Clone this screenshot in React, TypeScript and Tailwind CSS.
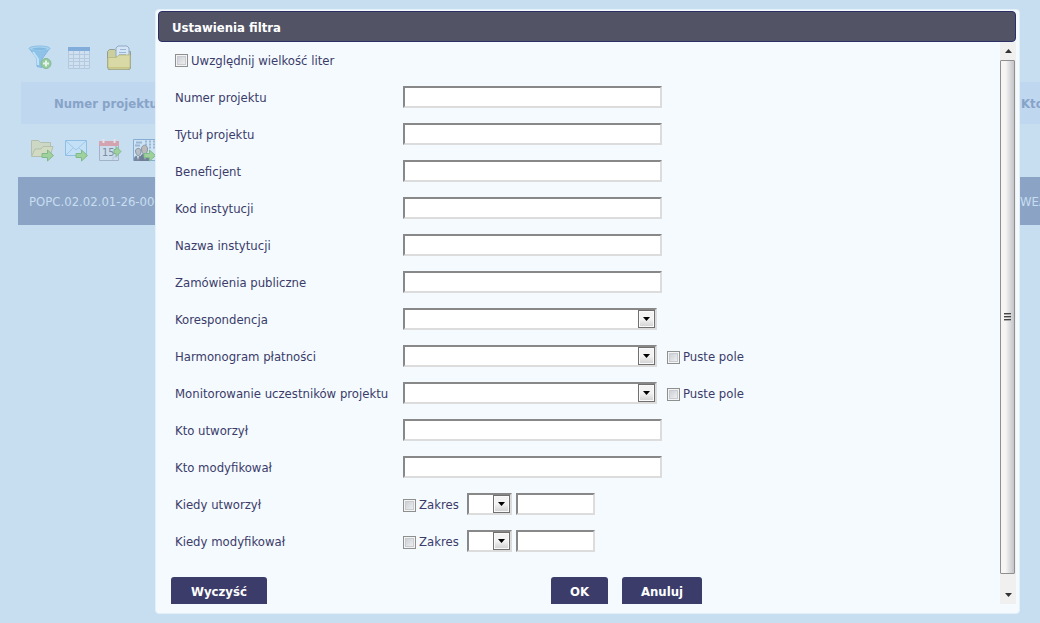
import { useId, type ReactNode } from "react";

const TEXT_FIELDS = ["Numer projektu", "Tytuł projektu", "Beneficjent", "Kod instytucji", "Nazwa instytucji", "Zamówienia publiczne"];
const AUTHOR_FIELDS = ["Kto utworzył", "Kto modyfikował"];
const DATE_FIELDS = ["Kiedy utworzył", "Kiedy modyfikował"];

const INSET = "h-[22px] bg-white border-2 border-t-[#888] border-l-[#888] border-r-[#dcdcdc] border-b-[#dcdcdc] outline-none";

function GreenArrow() {
    return <path d="M12 15.500h5.500v-3.500l6 5.500-6 5.500v-3.500H12z" fill="#a0d09b" stroke="#7fbb8a" strokeWidth="1" />;
}

function FunnelIcon() {
    return (
        <svg width="24" height="24" viewBox="0 0 24 24">
            <path d="M1.500 3.500 9 14v7.500l5 1V14l7.500-10.500z" fill="#8fc2e8" stroke="#7fb5e0" />
            <path d="M5 7 10 14v6" fill="none" stroke="#bfe1f6" strokeWidth="2" />
            <ellipse cx="11.500" cy="3.500" rx="10.500" ry="2.500" fill="#a9d4f0" stroke="#8bbfe5" />
            <ellipse cx="11.500" cy="3.800" rx="7.500" ry="1.200" fill="#84bae2" />
            <circle cx="18" cy="18.500" r="5" fill="#95cb9b" stroke="#83b996" />
            <path d="M18 15.500v6M15 18.500h6" stroke="#e4f3ee" strokeWidth="2" />
        </svg>
    );
}

function TableIcon() {
    return (
        <svg width="24" height="24" viewBox="0 0 24 24">
            <path d="M1.500 2.500h21v21h-21z" fill="#cfe1f1" stroke="#b3c8df" />
            <path d="M1 2h22v4H1z" fill="#82addb" />
            <path d="M1 9.500h22M1 13.500h22M1 16.500h22M1 20.500h22M6.500 6v18M12.500 6v18M17.500 6v18" stroke="#b5c9df" />
        </svg>
    );
}

function DocumentsIcon() {
    return (
        <svg width="26" height="26" viewBox="0 0 26 26">
            <path d="M1.500 22V6.500l2-2h5l2 2h14V23l-1 1.500h-21z" fill="#cbcf9d" stroke="#939d92" />
            <path d="M10 12V3l2-2h9l2 2v9z" fill="#d4e5f5" stroke="#8fa9c6" />
            <path d="M14 4.500h6M13 7.500h7M13 9.500h7" stroke="#9ab7d8" />
            <path d="M2 12.500h8l3-2.500h11v12l-1.500 2h-19L2 22z" fill="#d9d9a6" stroke="#bcbd86" />
            <path d="M3 22.500h20" stroke="#c9c584" />
        </svg>
    );
}

function FolderSendIcon() {
    return (
        <svg width="24" height="24" viewBox="0 0 24 24">
            <path d="M1.500 17.500v-15h7l2 2h10v4" fill="#ccd7c4" stroke="#b3bfae" />
            <path d="M1.500 18.500 5 11h6l2-2.500h10l-3 10z" fill="#d2dac2" stroke="#b3bfae" />
            <GreenArrow />
        </svg>
    );
}

function MailSendIcon() {
    return (
        <svg width="24" height="24" viewBox="0 0 24 24">
            <path d="M1.500 2.500h21v15h-21z" fill="#c4e0f7" stroke="#8fbfe5" />
            <path d="m2 3 10 9L22 3M2 17l7-7M22 17l-7-7" fill="none" stroke="#9fc9e9" />
            <GreenArrow />
        </svg>
    );
}

function CalendarSendIcon() {
    return (
        <svg width="24" height="24" viewBox="0 0 24 24">
            <path d="M1.500 3.500h19v19h-19z" fill="#cbdcec" stroke="#a2b3c9" />
            <path d="M1 3h20v5H1z" fill="#d3a3b0" />
            <path d="M5.500 1v4M16.500 1v4" stroke="#e6e1ea" strokeWidth="2" />
            <text x="4" y="18" fontSize="11" fontFamily="DejaVu Sans Condensed, DejaVu Sans, sans-serif" fill="#7d8ca3">15</text>
            <path d="M15 22v-3h6" fill="none" stroke="#b5c7dc" />
            <path d="M16 11.500h2V8.500l5 5-5 5v-3h-2z" fill="#a0d09b" stroke="#7fbb8a" />
        </svg>
    );
}

function PeopleSendIcon() {
    return (
        <svg width="24" height="24" viewBox="0 0 24 24">
            <path d="M1.500 1.500h22v21h-22z" fill="#cde2f3" stroke="#86aed2" />
            <path d="M4 4.500h6M3 7.500h5M13 3.500h2m2 0h2m2 0h2M13 6.500h2m2 0h2m2 0h2M17 9.500h2m2 0h2" stroke="#9bb6d3" strokeWidth="2" />
            <path d="M2 23c0-4 0-5 4-5.500 4 .5 5 2 5 5.500z" fill="#77879d" />
            <path d="M8 23c0-5 1-7 4.500-7.500 3 .5 4.500 2 4.500 7.500z" fill="#6f7f96" />
            <path d="M3.500 13c0-3 5-4 5.500 0 0 6-5 6-5.500 0z" fill="#b9bfc4" stroke="#8797aa" />
            <path d="M9.500 11c0-5 6-5 6 0 0 7-6 7-6 0z" fill="#bcbab9" stroke="#8797aa" />
            <path d="m5 18 1 4 1-4M12 17l1 5 1-5" fill="#dde9f4" />
            <GreenArrow />
        </svg>
    );
}

function IconButton({ label, children }: { label: string; children: ReactNode }) {
    return <button type="button" aria-label={label} className="shrink-0">{children}</button>;
}

function Check({ label }: { label: string }) {
    return (
        <label className="flex items-center gap-[3px] whitespace-nowrap">
            <input
                type="checkbox"
                className="appearance-none size-[13px] border border-[#8e8f8f] bg-linear-to-br from-[#c4c9cf] to-[#f6f6f6] shadow-[inset_0_0_0_1px_#f4f4f4,inset_0_0_0_2px_#c8ccd1] checked:bg-[#3b3c69]"
            />
            {label}
        </label>
    );
}

function SelectBox({ id, label, className }: { id?: string; label?: string; className: string }) {
    return (
        <div className={`relative ${className}`}>
            <select id={id} aria-label={label} className={`${INSET} block w-full appearance-none`} />
            <span className="pointer-events-none absolute right-[2px] inset-y-[2px] flex w-[17px] items-center justify-center border border-[#707070] bg-linear-to-b from-[#f3f3f3] from-50% to-[#d0d0d0] shadow-[inset_0_0_0_1px_#fafafa]">
                <svg width="7" height="4" viewBox="0 0 7 4"><path d="M0 0h7L3.500 4z" fill="#000" /></svg>
            </span>
        </div>
    );
}

function Row({ id, label, children }: { id?: string; label: string; children: ReactNode }) {
    return (
        <div className="flex h-[37px] items-center pb-px">
            <label htmlFor={id} className="w-[228px] shrink-0 pt-[2px] whitespace-nowrap">{label}</label>
            {children}
        </div>
    );
}

function TextRow({ label }: { label: string }) {
    const id = useId();
    return (
        <Row id={id} label={label}>
            <input id={id} type="text" className={`${INSET} w-[259px]`} />
        </Row>
    );
}

function SelectRow({ label, canBeEmpty }: { label: string; canBeEmpty?: boolean }) {
    const id = useId();
    return (
        <Row id={id} label={label}>
            <SelectBox id={id} className="mr-[10px] w-[254px]" />
            {canBeEmpty && <div className="pt-[2px]"><Check label="Puste pole" /></div>}
        </Row>
    );
}

function DateRow({ label }: { label: string }) {
    const id = useId();
    return (
        <Row id={id} label={label}>
            <div className="w-16 pt-[2px]"><Check label="Zakres" /></div>
            <SelectBox label={label} className="mr-1 w-[45px]" />
            <input id={id} type="text" className={`${INSET} w-[79px]`} />
        </Row>
    );
}

function DialogButton({ className, children }: { className: string; children: ReactNode }) {
    return <button type="button" className={`h-[27px] rounded-t-[3px] bg-[#3b3c69] pt-[2px] font-bold text-white ${className}`}>{children}</button>;
}

function ScrollTrack() {
    return (
        <div aria-hidden="true" className="flex w-4 shrink-0 flex-col items-start bg-[#f0f0f0]">
            <div className="flex h-[18px] w-full items-center justify-center"><svg width="7" height="4" viewBox="0 0 7 4"><path d="M3.500 0 7 4H0z" fill="#333" /></svg></div>
            <div className="flex w-[15px] flex-1 flex-col items-center justify-center gap-px rounded-[1px] border border-[#8f8f8f] bg-linear-to-r from-[#f5f5f5] from-35% to-[#c3c4c8]">
                <div className="h-[2px] w-[7px] border-t border-[#444] bg-[#aaa]" />
                <div className="h-[2px] w-[7px] border-t border-[#444] bg-[#aaa]" />
                <div className="h-[2px] w-[7px] border-t border-[#444] bg-[#aaa]" />
            </div>
            <div className="flex h-[30px] w-full items-center justify-center pt-3"><svg width="7" height="4" viewBox="0 0 7 4"><path d="M0 0h7L3.500 4z" fill="#333" /></svg></div>
        </div>
    );
}

export default function App() {
    return (
        <div className="min-h-screen overflow-hidden bg-[#c7ddf0] font-['DejaVu_Sans_Condensed','DejaVu_Sans',sans-serif] text-[13px] leading-4 text-[#3b3c69]">
            {/* Project list behind the dialog */}
            <main className="pt-[45px]">
                <div className="flex h-6 gap-[15px] pl-7">
                    <IconButton label="Filtr"><FunnelIcon /></IconButton>
                    <IconButton label="Kolumny"><TableIcon /></IconButton>
                    <IconButton label="Dokumenty"><DocumentsIcon /></IconButton>
                </div>
                <div className="mt-[13px] ml-[21px] flex h-[42px] items-center justify-between bg-[#bfd7ef] pt-[2px] pl-[33px] font-bold text-[#88a3c8]">
                    <span>Numer projektu</span>
                    <span className="w-[19px] overflow-hidden">Kto</span>
                </div>
                <div className="mt-[14px] flex gap-[10px] pl-[30px]">
                    <IconButton label="Projekt"><FolderSendIcon /></IconButton>
                    <IconButton label="Korespondencja"><MailSendIcon /></IconButton>
                    <IconButton label="Harmonogram"><CalendarSendIcon /></IconButton>
                    <IconButton label="Uczestnicy"><PeopleSendIcon /></IconButton>
                </div>
                <div className="mt-[15px] ml-[18px] flex h-12 items-center justify-between bg-[#8ba4c5] pt-[2px] pl-[11px] text-[#c7ddf0]">
                    <span className="whitespace-nowrap">POPC.02.02.01-26-000</span>
                    <span className="w-5 overflow-hidden">WEA</span>
                </div>
            </main>

            {/* Filter dialog */}
            <div className="absolute inset-x-0 top-0 pt-[9px] pr-5 pl-[155px]">
                <section role="dialog" aria-labelledby="filter-title" className="rounded-[4px] border border-[#e3f0fa] bg-[#f5faff] pt-px pr-[3px] pb-[9px] pl-[2px]">
                    <h1 id="filter-title" className="flex h-[31px] items-center rounded-[4px] border border-[#2c2e68] bg-[#525466] px-[13px] pt-[2px] font-bold text-white">
                        Ustawienia filtra
                    </h1>
                    <form className="flex">
                        <div className="flex-1 pl-[13px]">
                            <div className="pl-1">
                                <div className="flex h-[37px] items-center"><Check label="Uwzględnij wielkość liter" /></div>
                                {TEXT_FIELDS.map((label) => <TextRow key={label} label={label} />)}
                                <SelectRow label="Korespondencja" />
                                <SelectRow label="Harmonogram płatności" canBeEmpty />
                                <SelectRow label="Monitorowanie uczestników projektu" canBeEmpty />
                                {AUTHOR_FIELDS.map((label) => <TextRow key={label} label={label} />)}
                                {DATE_FIELDS.map((label) => <DateRow key={label} label={label} />)}
                            </div>
                            <div className="mt-[17px] flex">
                                <div className="w-[380px]"><DialogButton className="w-24">Wyczyść</DialogButton></div>
                                <div className="flex gap-[14px]">
                                    <DialogButton className="w-[57px]">OK</DialogButton>
                                    <DialogButton className="w-20">Anuluj</DialogButton>
                                </div>
                            </div>
                        </div>
                        <ScrollTrack />
                    </form>
                </section>
            </div>
        </div>
    );
}
